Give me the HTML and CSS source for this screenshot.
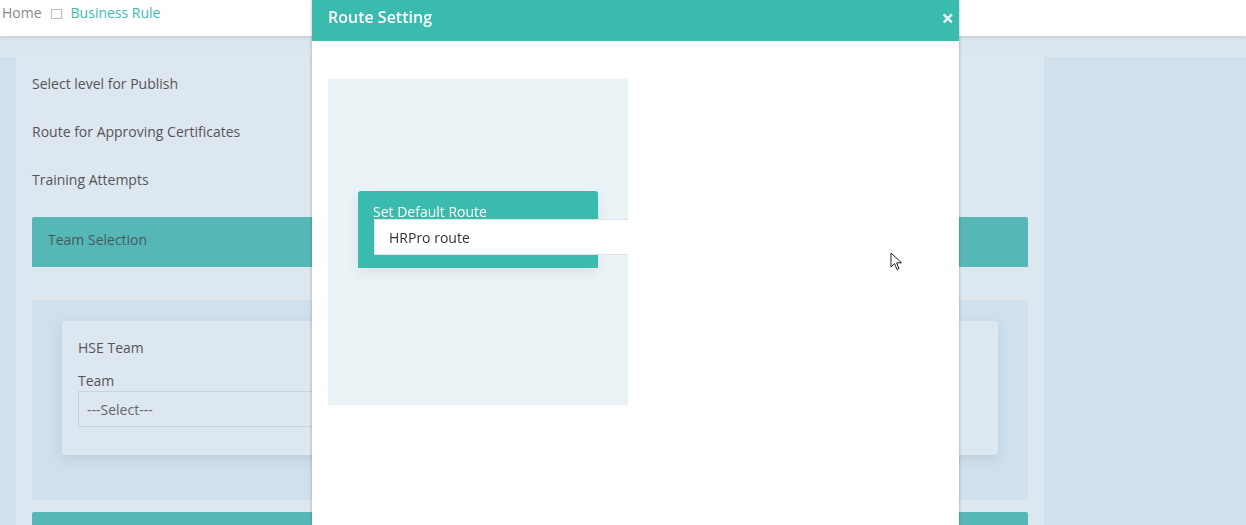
FILE: index.html
```html
<!DOCTYPE html>
<html lang="en">
<head>
  <meta charset="UTF-8">
  <title>Business Rule</title>
  <link rel="stylesheet" href="styles.css">
</head>
<body>
  <header class="topbar">
    <span class="crumb">Home</span>
    <span class="crumb-icon"></span>
    <span class="crumb active">Business Rule</span>
  </header>
  <div class="topbar-gap"></div>

  <main class="panel">
    <div class="rule-row">Select level for Publish</div>
    <div class="rule-row">Route for Approving Certificates</div>
    <div class="rule-row">Training Attempts</div>

    <div class="section-bar">Team Selection</div>

    <div class="team-area">
      <div class="team-card">
        <div class="team-title">HSE Team</div>
        <label class="field-label">Team</label>
        <div class="select-box">---Select---</div>
      </div>
    </div>

    <div class="section-bar"></div>
  </main>

  <div class="modal">
    <div class="modal-head">
      <span class="modal-title">Route Setting</span>
      <span class="modal-close">&times;</span>
    </div>
    <div class="modal-body">
      <div class="route-box">
        <div class="route-card">
          <div class="route-label">Set Default Route</div>
          <div class="route-input">HRPro route</div>
        </div>
      </div>
    </div>
  </div>

  <svg class="cursor" width="13" height="20" viewBox="0 0 13 20">
    <path d="M1 1 L1 15 L4.5 11.5 L7 17.5 L9 16.6 L6.6 10.8 L11.5 10.8 Z" fill="#fff" stroke="#222" stroke-width="1" stroke-linejoin="round"/>
  </svg>
</body>
</html>
```

FILE: styles.css
```css
:root {
  --teal: #3bbbad;
  --teal-soft: #55b8b6;
  --bg: #d0e0ec;
  --panel: #dde7f0;
  --text: #555;
}

html { overflow: hidden; }

body {
  margin: 0;
  background: var(--bg);
  font-family: 'Open Sans', 'Noto Sans', sans-serif;
  font-size: 14px;
  color: var(--text);
  height: 525px;
  overflow: hidden;
}

.topbar {
  height: 36px;
  background: #fff;
  box-shadow: 0 1px 4px rgba(0, 0, 0, 0.15);
  display: flex;
  align-items: flex-start;
  padding: 3px 2px 0;
  box-sizing: border-box;
  line-height: 20px;
  position: relative;
}

.crumb { color: #888; }
.crumb.active { color: var(--teal); }

.crumb-icon {
  width: 9px;
  height: 8px;
  border: 1px solid #bbb;
  margin: 6px 9px 0 9px;
}

.topbar-gap {
  height: 21px;
  background: #dce6ef;
}

.panel {
  margin-left: 16px;
  width: 1028px;
  background: var(--panel);
  padding: 3px 16px 0;
  box-sizing: border-box;
  height: 468px;
  overflow: hidden;
}

.rule-row {
  height: 48px;
  line-height: 48px;
}

.section-bar {
  margin-top: 13px;
  height: 50px;
  line-height: 46px;
  padding-left: 16px;
  background: var(--teal-soft);
  color: #46595f;
  border-radius: 2px 2px 0 0;
}

.team-area {
  margin-top: 33px;
  background: var(--bg);
  padding: 21px 30px;
  height: 200px;
  box-sizing: border-box;
}

.team-area + .section-bar { margin-top: 12px; }

.team-card {
  background: var(--panel);
  border-radius: 3px;
  box-shadow: 0 4px 12px rgba(150, 175, 195, 0.35);
  padding: 17px 16px 28px;
  height: 134px;
  box-sizing: border-box;
}

.team-title {
  line-height: 20px;
}

.field-label {
  display: block;
  margin-top: 13px;
  line-height: 20px;
}

.select-box {
  width: 620px;
  height: 36px;
  line-height: 36px;
  border: 1px solid #c7d5e0;
  padding-left: 8px;
  box-sizing: border-box;
  color: #666;
}

.modal {
  position: fixed;
  left: 312px;
  top: 0;
  width: 647px;
  bottom: 0;
  background: #fff;
  box-shadow: 0 0 3px rgba(0, 0, 0, 0.3);
}

.modal-head {
  height: 41px;
  background: var(--teal);
  display: flex;
  align-items: center;
  justify-content: space-between;
  padding: 0 5px 0 16px;
  color: #fff;
  box-sizing: border-box;
}

.modal-title {
  font-size: 16px;
  font-weight: 600;
  margin-top: -7px;
}

.modal-close {
  font-size: 22px;
  font-weight: bold;
  margin-top: -8px;
  opacity: 0.9;
}

.modal-body {
  padding: 38px 16px;
}

.route-box {
  width: 300px;
  height: 326px;
  background: #eaf3f6;
  overflow: hidden;
  padding: 112px 0 0 30px;
  box-sizing: border-box;
}

.route-card {
  width: 240px;
  background: var(--teal);
  border-radius: 3px 3px 0 0;
  padding: 12px 0 13px 15px;
  box-sizing: border-box;
  box-shadow: 0 4px 14px rgba(0, 0, 0, 0.08);
}

.route-label {
  color: #fff;
  line-height: 17px;
}

.route-input {
  width: 290px;
  height: 36px;
  line-height: 35px;
  margin-left: 1px;
  margin-top: -1px;
  background: #fff;
  border: 1px solid #e2e2e2;
  padding-left: 14px;
  box-sizing: border-box;
  color: #333;
}

.cursor {
  position: fixed;
  left: 890px;
  top: 252px;
}
```
